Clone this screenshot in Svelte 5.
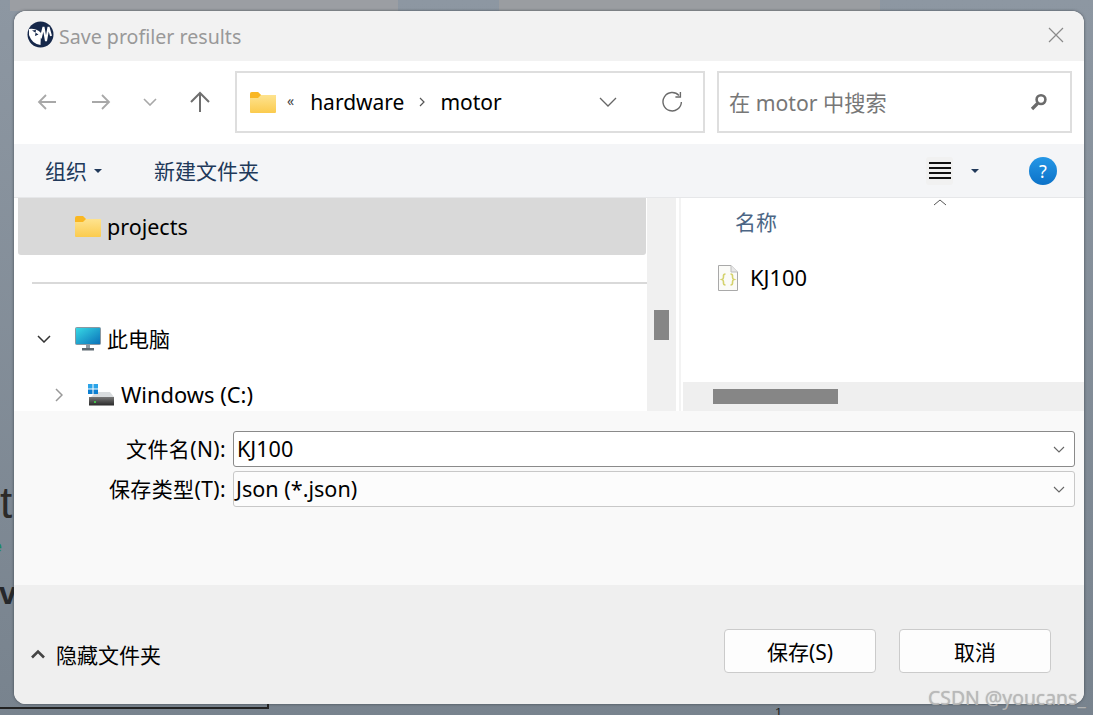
<script>
    let fileName = "KJ100";
    let fileType = "Json (*.json)";
</script>

<div class="desktop">
    <span class="bg-top-a"></span>
    <span class="bg-top-b"></span>
    <span class="bg-t">t</span>
    <span class="bg-e">e</span>
    <span class="bg-v">v</span>
    <span class="bg-line"></span>
    <span class="bg-one">1</span>

    <div class="dialog">
        <header class="titlebar">
            <svg class="logo" width="27" height="27" viewBox="0 0 27 27">
                <circle cx="13.5" cy="13.5" r="13" fill="#16284a" />
                <path d="M2 8 Q9 7 14 12 L13.5 24 Q5 23 2 14Z" fill="#fff" />
                <path d="M5 9.5 L11.5 13.5 L8 15 L9 9Z" fill="#16284a" />
                <path d="M11.5 14 L14 16 L16.5 6 L19 20 L21.5 6 L24 15" fill="none" stroke="#fff" stroke-width="2" />
            </svg>
            <span class="title">Save profiler results</span>
            <svg class="close" width="16" height="16" viewBox="0 0 16 16">
                <path d="M1 1 L15 15 M15 1 L1 15" stroke="#8a8a8a" stroke-width="1.2" fill="none" />
            </svg>
        </header>

        <nav class="navbar">
            <div class="nav-buttons">
                <svg class="nav-btn back" width="20" height="18" viewBox="0 0 20 18">
                    <path d="M19 9 H2 M9 2 L2 9 L9 16" stroke="#a8a8a8" stroke-width="1.8" fill="none" />
                </svg>
                <svg class="nav-btn forward" width="20" height="18" viewBox="0 0 20 18">
                    <path d="M1 9 H18 M11 2 L18 9 L11 16" stroke="#a8a8a8" stroke-width="1.8" fill="none" />
                </svg>
                <svg class="nav-btn recent" width="14" height="8" viewBox="0 0 14 8">
                    <path d="M1 1 L7 7 L13 1" stroke="#a8a8a8" stroke-width="1.6" fill="none" />
                </svg>
                <svg class="nav-btn up" width="22" height="22" viewBox="0 0 22 22">
                    <path d="M11 21 V2 M2 11 L11 2 L20 11" stroke="#6f6f6f" stroke-width="2" fill="none" />
                </svg>
            </div>
            <div class="address">
                <svg width="26" height="21" viewBox="0 0 26 21">
                    <defs>
                        <linearGradient id="folder" x1="0" y1="0" x2="0" y2="1">
                            <stop offset="0" stop-color="#fee79a" />
                            <stop offset="1" stop-color="#fbcb4e" />
                        </linearGradient>
                    </defs>
                    <path d="M0 2 Q0 0 2 0 H8 L11 3 H26 V20 Q26 21 25 21 H1 Q0 21 0 20Z" fill="url(#folder)" />
                    <path d="M0 2 Q0 0 2 0 H8 L11 3 L8 6 H0Z" fill="#f9b723" />
                </svg>
                <span class="crumb-more">«</span>
                <span class="crumb">hardware</span>
                <svg class="crumb-sep" width="7" height="10" viewBox="0 0 7 10">
                    <path d="M1 1 L5 5 L1 9" stroke="#555" stroke-width="1.2" fill="none" />
                </svg>
                <span class="crumb last">motor</span>
                <svg class="addr-drop" width="18" height="10" viewBox="0 0 18 10">
                    <path d="M1 1 L9 9 L17 1" stroke="#666" stroke-width="1.3" fill="none" />
                </svg>
                <svg class="refresh" width="22" height="22" viewBox="0 0 22 22">
                    <path d="M18 4.5 A9.2 9.2 0 1 0 20.4 11" stroke="#6b6b6b" stroke-width="1.4" fill="none" />
                    <path d="M19.4 1 V6 H14.4" stroke="#6b6b6b" stroke-width="1.4" fill="none" />
                </svg>
            </div>
            <div class="search">
                <span class="search-text">在 motor 中搜索</span>
                <svg width="18" height="18" viewBox="0 0 18 18">
                    <circle cx="11" cy="6.6" r="4.4" stroke="#6b6b6b" stroke-width="2.6" fill="none" />
                    <path d="M7.5 10.5 L2 16" stroke="#6b6b6b" stroke-width="3.2" />
                </svg>
            </div>
        </nav>

        <div class="toolbar">
            <span class="tool">组织</span>
            <span class="caret organise"></span>
            <span class="tool new-folder">新建文件夹</span>
            <span class="view-btn">
                <span></span><span></span><span></span><span></span>
            </span>
            <span class="caret view-caret"></span>
            <span class="help">?</span>
        </div>

        <div class="panes">
            <div class="tree">
                <div class="row selected">
                    <svg width="26" height="21" viewBox="0 0 26 21">
                        <path d="M0 2 Q0 0 2 0 H8 L11 3 H26 V20 Q26 21 25 21 H1 Q0 21 0 20Z" fill="url(#folder)" />
                        <path d="M0 2 Q0 0 2 0 H8 L11 3 L8 6 H0Z" fill="#f9b723" />
                    </svg>
                    <span class="latin">projects</span>
                </div>
                <div class="divider"></div>
                <div class="row pc">
                    <svg class="chev" width="14" height="8" viewBox="0 0 14 8">
                        <path d="M1 1 L7 7 L13 1" stroke="#333" stroke-width="1.5" fill="none" />
                    </svg>
                    <svg width="26" height="24" viewBox="0 0 26 24">
                        <defs>
                            <linearGradient id="screen" x1="0" y1="0" x2="1" y2="1">
                                <stop offset="0" stop-color="#38dbe6" />
                                <stop offset="1" stop-color="#0a6fb8" />
                            </linearGradient>
                        </defs>
                        <rect x="0.5" y="0.5" width="25" height="17" rx="1" fill="url(#screen)" stroke="#8a98a2" />
                        <rect x="11" y="18" width="4" height="3" fill="#8d9aa3" />
                        <rect x="7" y="21" width="12" height="2.5" fill="#5c6870" />
                    </svg>
                    <span class="cjk-row">此电脑</span>
                </div>
                <div class="row drive">
                    <svg class="chev" width="8" height="14" viewBox="0 0 8 14">
                        <path d="M1 1 L7 7 L1 13" stroke="#999" stroke-width="1.5" fill="none" />
                    </svg>
                    <svg width="26" height="22" viewBox="0 0 26 22">
                        <defs>
                            <linearGradient id="disk" x1="0" y1="0" x2="0" y2="1">
                                <stop offset="0" stop-color="#777" />
                                <stop offset="1" stop-color="#2a2a2a" />
                            </linearGradient>
                        </defs>
                        <path d="M3 13 L8 8 H22 L26 13Z" fill="#d9dcde" />
                        <rect x="1" y="13" width="25" height="8.5" fill="url(#disk)" />
                        <rect x="6" y="17" width="2" height="2" fill="#45c04a" />
                        <rect x="0" y="0" width="4.5" height="4.5" fill="#2aa3e8" />
                        <rect x="5.5" y="0" width="4.5" height="4.5" fill="#2aa3e8" />
                        <rect x="0" y="5.5" width="4.5" height="4.5" fill="#0d7fd1" />
                        <rect x="5.5" y="5.5" width="4.5" height="4.5" fill="#0d7fd1" />
                    </svg>
                    <span class="latin wide">Windows (C:)</span>
                </div>
            </div>
            <div class="v-scroll"><div class="v-thumb"></div></div>
            <div class="files">
                <div class="files-body">
                    <div class="col-head">
                        <svg class="sort" width="14" height="7" viewBox="0 0 14 7">
                            <path d="M1 6 L7 1 L13 6" stroke="#555" stroke-width="1" fill="none" />
                        </svg>
                        名称
                    </div>
                    <div class="file">
                        <svg width="20" height="26" viewBox="0 0 20 26">
                            <path d="M0.5 0.5 H13 L19.5 7 V25.5 H0.5Z" fill="#fbfbf8" stroke="#a9a9a9" />
                            <path d="M13 0.5 V7 H19.5" fill="#e8e8e8" stroke="#bdbdbd" />
                            <path d="M7.5 9 Q5 9 5.5 12 Q5.5 14 4 14.5 Q5.5 15 5.5 17 Q5 20 7.5 20 M12.5 9 Q15 9 14.5 12 Q14.5 14 16 14.5 Q14.5 15 14.5 17 Q15 20 12.5 20" stroke="#d4d26c" stroke-width="1.6" fill="none" />
                        </svg>
                        <span class="latin wide">KJ100</span>
                    </div>
                </div>
                <div class="h-scroll"><div class="h-thumb"></div></div>
            </div>
        </div>

        <div class="form">
            <label class="field" for="name">
                <span class="field-label">文件名(N):</span>
                <span class="combo active">
                    <input id="name" value={fileName} />
                    <svg width="12" height="7" viewBox="0 0 12 7"><path d="M1 1 L6 6 L11 1" stroke="#666" stroke-width="1.1" fill="none" /></svg>
                </span>
            </label>
            <div class="field">
                <span class="field-label">保存类型(T):</span>
                <span class="combo">
                    <span class="combo-value">{fileType}</span>
                    <svg width="12" height="7" viewBox="0 0 12 7"><path d="M1 1 L6 6 L11 1" stroke="#666" stroke-width="1.1" fill="none" /></svg>
                </span>
            </div>
        </div>

        <footer class="footer">
            <div class="hide-folders">
                <svg width="16" height="10" viewBox="0 0 16 10">
                    <path d="M2 8.5 L8 2.5 L14 8.5" stroke="#444" stroke-width="2.6" fill="none" />
                </svg>
                <span>隐藏文件夹</span>
            </div>
            <div class="actions">
                <button>保存(S)</button>
                <button>取消</button>
            </div>
        </footer>
    </div>

    <span class="watermark">CSDN @youcans_</span>
</div>

<style>
    :global(body) {
        margin: 0;
        background: #87919c;
    }
    .desktop {
        position: relative;
        width: 1093px;
        height: 715px;
        overflow: hidden;
        padding: 11px 9px 11px 14px;
        box-sizing: border-box;
        background: linear-gradient(#8d97a2, #78838e);
        font-family: "Noto Sans", "Noto Sans CJK SC", sans-serif;
        font-size: 21px;
        color: #000;
    }
    .bg-top-a {
        position: absolute;
        left: 10px;
        top: 0;
        width: 388px;
        height: 11px;
        background: #9b9ea3;
    }
    .bg-top-b {
        position: absolute;
        left: 499px;
        top: 0;
        width: 381px;
        height: 11px;
        background: #9a9da1;
    }
    .bg-t {
        position: absolute;
        left: 0;
        top: 478px;
        font: 44px "Liberation Sans", sans-serif;
        color: #2c2a28;
    }
    .bg-e {
        position: absolute;
        left: -7px;
        top: 538px;
        font: 16px "Liberation Sans", sans-serif;
        color: #1a8a5a;
    }
    .bg-v {
        position: absolute;
        left: -1px;
        top: 575px;
        font: bold 32px "Liberation Sans", sans-serif;
        color: #26282b;
    }
    .bg-line {
        position: absolute;
        left: 0;
        top: 704px;
        width: 269px;
        height: 5px;
        border-right: 2px solid #222;
        border-bottom: 2px solid #222;
        box-sizing: border-box;
    }
    .bg-one {
        position: absolute;
        left: 775px;
        top: 705px;
        font: 13px "Liberation Sans", sans-serif;
        color: #222;
    }

    .dialog {
        width: 1070px;
        height: 693px;
        border-radius: 12px;
        overflow: hidden;
        display: flex;
        flex-direction: column;
        position: relative;
        box-shadow: 0 0 3px rgba(40, 44, 50, 0.7);
        background: #fff;
    }

    .titlebar {
        height: 50px;
        flex: none;
        background: #f2f2f2;
        display: flex;
        align-items: center;
        padding: 0 20px 0 13px;
    }
    .logo {
        margin-top: -3px;
    }
    .title {
        margin-left: 5px;
        color: #999;
        flex: 1;
        font-size: 19.6px;
        margin-top: 1px;
    }
    .close {
        margin-top: -2px;
    }

    .navbar {
        height: 83px;
        flex: none;
        background: #fff;
        display: flex;
        align-items: center;
        padding-right: 12px;
        padding-bottom: 1px;
        box-sizing: border-box;
    }
    .nav-buttons {
        width: 221px;
        flex: none;
        display: flex;
        align-items: center;
        padding-left: 23px;
        box-sizing: border-box;
    }
    .nav-btn.forward {
        margin-left: 34px;
    }
    .nav-btn.recent {
        margin-left: 32px;
    }
    .nav-btn.up {
        margin-left: 32px;
    }
    .address,
    .search {
        height: 62px;
        box-sizing: border-box;
        border: 2px solid #dedede;
        display: flex;
        align-items: center;
        background: #fff;
    }
    .address {
        width: 470px;
        flex: none;
        padding: 0 20px 0 13px;
    }
    .crumb-more {
        font-size: 14px;
        margin-left: 11px;
        margin-top: -4px;
        color: #444;
    }
    .crumb {
        margin-left: 16px;
    }
    .crumb.last {
        margin-left: 14px;
    }
    .crumb-sep {
        margin-left: 15px;
    }
    .addr-drop {
        margin-left: auto;
        margin-right: 44px;
    }
    .search {
        margin-left: 12px;
        flex: 1;
        justify-content: space-between;
        padding: 0 22px 0 10px;
        color: #777;
    }
    .search-text {
        margin-top: -2px;
        font-size: 21.2px;
    }

    .toolbar {
        height: 54px;
        flex: none;
        background: #f4f5f7;
        display: flex;
        align-items: center;
        padding-left: 31px;
        color: #21395a;
        border-bottom: 1px solid #e6e7e9;
        box-sizing: border-box;
    }
    .tool {
        margin-top: -2px;
    }
    .caret {
        width: 0;
        height: 0;
        border: 4px solid transparent;
        border-top: 4px solid #21395a;
        border-bottom: 0;
    }
    .organise {
        margin-left: 7px;
    }
    .new-folder {
        margin-left: 52px;
    }
    .view-btn {
        margin-left: auto;
        margin-right: -1px;
        width: 27px;
        height: 28px;
        background: #f1f1f1;
        border-radius: 3px;
        display: flex;
        flex-direction: column;
        justify-content: center;
        align-items: center;
        gap: 3px;
    }
    .view-btn span {
        width: 22px;
        height: 2px;
        background: #111;
    }
    .view-caret {
        margin-left: 19px;
    }
    .help {
        margin: 0 27px 0 50px;
        width: 28px;
        height: 28px;
        border-radius: 50%;
        background: linear-gradient(#2597e6, #0c72c8);
        color: #fff;
        font-size: 18px;
        display: flex;
        align-items: center;
        justify-content: center;
    }

    .panes {
        height: 213px;
        flex: none;
        display: flex;
        background: #fff;
        overflow: hidden;
    }
    .tree {
        width: 633px;
        flex: none;
        overflow: hidden;
    }
    .row {
        height: 56px;
        display: flex;
        align-items: center;
    }
    .row span {
        margin-left: 7px;
    }
    .latin {
        font-size: 21.5px;
    }
    .latin.wide {
        font-size: 21.9px;
        margin-top: -2px;
    }
    .row .cjk-row {
        margin-left: 6px;
        margin-top: -3px;
    }
    .selected {
        margin: 0 1px 0 4px;
        height: 57px;
        padding-left: 57px;
        background: #d9d9d9;
        border-radius: 0 0 3px 3px;
    }
    .selected .latin {
        margin-left: 6px;
    }
    .divider {
        height: 2px;
        margin: 27px 0 27px 18px;
        background: #d9d9d9;
    }
    .pc {
        padding-left: 23px;
    }
    .pc svg.chev {
        margin-right: 24px;
    }
    .drive {
        padding-left: 41px;
    }
    .drive svg.chev {
        margin-right: 25px;
    }
    .v-scroll {
        width: 29px;
        flex: none;
        background: #f0f0f0;
        position: relative;
    }
    .v-thumb {
        position: absolute;
        left: 7px;
        top: 112px;
        width: 15px;
        height: 30px;
        background: #868686;
    }
    .files {
        flex: 1;
        display: flex;
        flex-direction: column;
        margin-left: 3px;
        border-left: 2px solid #f3f3f3;
    }
    .files-body {
        flex: 1;
        padding-left: 37px;
    }
    .col-head {
        position: relative;
        height: 48px;
        line-height: 48px;
        padding-left: 17px;
        color: #4c6685;
    }
    .sort {
        position: absolute;
        left: 215px;
        top: 1px;
    }
    .file {
        display: flex;
        align-items: center;
        gap: 12px;
        height: 64px;
    }
    .h-scroll {
        height: 29px;
        flex: none;
        background: #efefef;
        margin-left: 2px;
        padding-top: 7px;
        box-sizing: border-box;
    }
    .h-thumb {
        margin-left: 30px;
        width: 125px;
        height: 15px;
        background: #868686;
    }

    .form {
        height: 174px;
        flex: none;
        box-sizing: border-box;
        background: #f9f9f9;
        padding: 20px 9px 0 0;
        display: flex;
        flex-direction: column;
        gap: 4px;
    }
    .field {
        display: flex;
        align-items: center;
        height: 36px;
    }
    .field-label {
        width: 212px;
        text-align: right;
        flex: none;
        letter-spacing: 0.4px;
        margin-top: -2px;
    }
    .combo {
        margin-left: 7px;
        flex: 1;
        height: 36px;
        box-sizing: border-box;
        border: 1px solid #c8c8c8;
        border-radius: 3px;
        background: #fcfcfc;
        display: flex;
        align-items: center;
        padding: 0 9px 0 2px;
        font-size: 21.6px;
    }
    .combo.active {
        border-color: #8a8a8a;
        background: #fff;
    }
    .combo input {
        flex: 1;
        min-width: 0;
        border: 0;
        outline: 0;
        padding: 0 0 2px 1px;
        background: transparent;
        font: inherit;
    }
    .combo-value {
        flex: 1;
        margin-top: -2px;
    }

    .footer {
        flex: 1;
        background: #efefef;
        display: flex;
        justify-content: space-between;
        align-items: center;
        padding: 0 33px 0 16px;
    }
    .hide-folders {
        display: flex;
        align-items: center;
        gap: 10px;
        margin-top: 19px;
    }
    .actions {
        display: flex;
        gap: 23px;
        margin-top: 12px;
    }
    .actions button {
        width: 152px;
        height: 44px;
        box-sizing: border-box;
        border: 1px solid #cbcbcb;
        border-radius: 4px;
        background: #fdfdfd;
        font: inherit;
        color: #000;
        padding: 0;
    }

    .watermark {
        position: absolute;
        left: 928px;
        top: 684px;
        font-size: 19.4px;
        color: rgba(185, 185, 185, 0.9);
        text-shadow: 0 0 1px rgba(120, 120, 120, 0.5);
    }
</style>
